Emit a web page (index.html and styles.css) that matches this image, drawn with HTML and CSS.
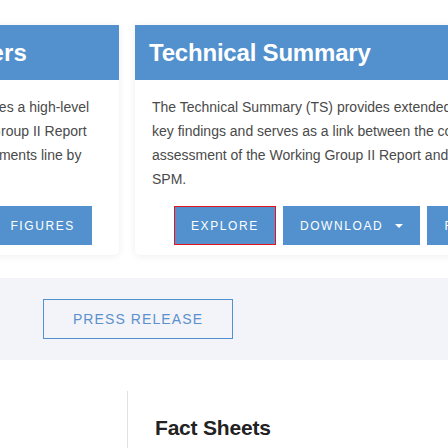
FILE: index.html
```html
<!DOCTYPE html>
<html>
<head>
<meta charset="utf-8">
<link rel="stylesheet" href="styles.css">
</head>
<body>
<section class="carousel">
  <div class="track">
    <article class="card card-first">
      <header class="card-head"><h2>Summary for Policymakers</h2></header>
      <div class="card-body">
        <p>The Summary for Policymakers (SPM) provides a high-level<br>summary of the key findings of the Working Group II Report<br>and is approved by the IPCC member governments line by<br>line.</p>
        <div class="actions">
          <a class="btn">Explore</a>
          <a class="btn">Download <span class="caret"></span></a>
          <a class="btn">Figures</a>
        </div>
      </div>
    </article>
    <article class="card">
      <header class="card-head"><h2>Technical Summary</h2></header>
      <div class="card-body">
        <p>The Technical Summary (TS) provides extended summary of<br>key findings and serves as a link between the comprehensive<br>assessment of the Working Group II Report and the<br>SPM.</p>
        <div class="actions">
          <a class="btn btn-focus">Explore</a>
          <a class="btn">Download <span class="caret"></span></a>
          <a class="btn">Figures</a>
        </div>
      </div>
    </article>
  </div>
</section>
<section class="band">
  <a class="outline-btn">Press Release</a>
</section>
<section class="facts">
  <div class="facts-side"></div>
  <div class="facts-main"><h3>Fact Sheets</h3></div>
</section>
</body>
</html>
```
FILE: styles.css
```css
* { box-sizing: border-box; }
html, body { margin: 0; padding: 0; background: #fff; }
body { font-family: "Liberation Sans", Arial, sans-serif; color: #4a4a4a; overflow: hidden; }

.carousel { overflow: hidden; padding-top: 25px; padding-bottom: 23px; }
.track { display: flex; gap: 16px; margin-left: -299px; }
.card {
  flex: 0 0 418px;
  background: #fff;
  border-radius: 0 0 5px 5px;
  box-shadow: 0 1px 8px rgba(0,0,0,0.07);
}
.card-head {
  height: 55px;
  background: #5291cd;
  display: flex;
  align-items: center;
  padding-left: 14px;
}
.card-first .card-head h2 { letter-spacing: 0.1px; }
.card-head h2 {
  margin: 0;
  color: #fff;
  font-size: 24px;
  font-weight: 700;
  letter-spacing: -0.2px;
  white-space: nowrap;
}
.card-body { padding: 15px 17px 10px 17px; }
.card-body p {
  margin: 0;
  font-size: 14px;
  line-height: 24px;
  white-space: nowrap;
}
.actions {
  display: flex;
  gap: 7px;
  margin-top: 15px;
  padding-left: 22px;
}
.btn {
  height: 39px;
  display: flex;
  align-items: center;
  padding: 0 16px 0 16px;
  background: #5291cd;
  border: 1px solid #5291cd;
  color: #fff;
  font-size: 12px;
  letter-spacing: 1.6px;
  text-transform: uppercase;
  white-space: nowrap;
}
.btn-focus { border-color: #e4141b; }
.caret {
  display: inline-block;
  width: 0; height: 0;
  margin-left: 12px;
  border-left: 4px solid transparent;
  border-right: 4px solid transparent;
  border-top: 4px solid #fff;
}

.band {
  background: #f3f4f9;
  padding: 21px 0 21px 43px;
  display: flex;
}
.outline-btn {
  height: 40px;
  width: 190px;
  display: flex;
  align-items: center;
  justify-content: center;
  border: 1px solid #5291cd;
  color: #5b90cc;
  font-size: 14px;
  letter-spacing: 1.1px;
  text-transform: uppercase;
}

.facts { display: flex; padding-top: 31px; }
.facts-side { width: 127px; flex: 0 0 127px; }
.facts-main {
  border-left: 1px solid #e2e2e2;
  padding: 24px 0 9px 27px;
  flex: 1;
}
.facts-main h3 {
  margin: 0;
  font-size: 21px;
  line-height: 25px;
  font-weight: 700;
  letter-spacing: -0.2px;
  color: #222;
}
```
